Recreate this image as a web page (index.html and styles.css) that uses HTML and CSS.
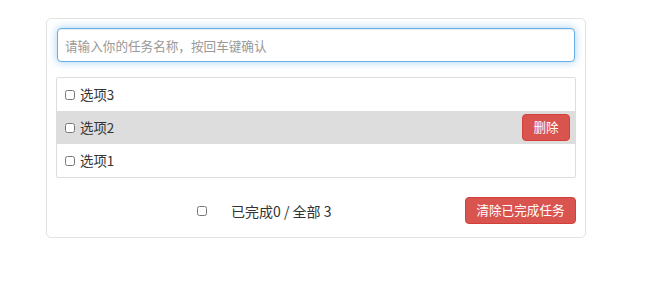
FILE: index.html
```html
<!DOCTYPE html>
<html lang="zh-CN">
<head>
    <meta charset="UTF-8">
    <meta name="viewport" content="width=device-width, initial-scale=1.0">
    <title>Todo List</title>
    <link rel="stylesheet" href="styles.css">
</head>
<body>

    <!-- main todo box -->
    <div class="todo-wrap">
        <input class="todo-input" type="text" placeholder="请输入你的任务名称，按回车键确认">

        <!-- task list -->
        <ul class="todo-list">
            <li class="todo-item">
                <label><input type="checkbox"><span>选项3</span></label>
            </li>
            <li class="todo-item active">
                <label><input type="checkbox"><span>选项2</span></label>
                <button class="btn btn-danger btn-del">删除</button>
            </li>
            <li class="todo-item">
                <label><input type="checkbox"><span>选项1</span></label>
            </li>
        </ul>

        <!-- footer with counts -->
        <div class="todo-footer">
            <input type="checkbox" class="check-all">
            <span class="todo-count">已完成0 / 全部 3</span>
            <button class="btn btn-danger btn-clear">清除已完成任务</button>
        </div>
    </div>

</body>
</html>
```

FILE: styles.css
```css
body {
    margin: 0;
    font-family: "Noto Sans CJK SC", "Liberation Sans", Arial, sans-serif;
    color: #333;
    background: #fff;
}
.todo-wrap {
    width: 540px;
    box-sizing: border-box;
    margin: 18px 0 0 46px;
    padding: 9px 9px 13px;
    border: 1px solid #e3e3e3;
    border-radius: 5px;
}
.todo-input {
    display: block;
    box-sizing: border-box;
    width: calc(100% - 2px);
    height: 34px;
    margin: 0 auto;
    padding: 6px 7px;
    border: 1px solid #66afe9;
    border-radius: 4px;
    outline: none;
    font-family: inherit;
    font-size: 12.6px;
    box-shadow: inset 0 1px 1px rgba(0, 0, 0, .075), 0 0 8px rgba(102, 175, 233, .6);
}
.todo-input::placeholder {
    color: #999;
}
.todo-list {
    list-style: none;
    margin: 15px 0 0;
    padding: 0;
    border: 1px solid #ddd;
    border-radius: 2px;
}
.todo-item {
    display: flex;
    align-items: center;
    justify-content: space-between;
    height: 33px;
    padding: 0 5px 0 7px;
    font-size: 13.4px;
}
.todo-item.active {
    background: #ddd;
}
.todo-item label {
    display: flex;
    align-items: center;
    line-height: 1;
}
input[type="checkbox"] {
    width: 10px;
    height: 10px;
    margin: 0 5px 0 1px;
}
.btn {
    height: 27px;
    padding: 0 9px;
    border-radius: 4px;
    font-family: inherit;
    font-size: 12.6px;
    line-height: 1;
    cursor: pointer;
}
.btn-danger {
    color: #fff;
    background-color: #d9534f;
    border: 1px solid #d43f3a;
}
.btn-danger:hover {
    background-color: #c9302c;
}
.btn-del {
    width: 48px;
}
.todo-footer {
    display: flex;
    align-items: center;
    margin-top: 19px;
    font-size: 14px;
    line-height: 1;
}
.todo-footer .check-all {
    margin: 0 0 0 141px;
}
.todo-count {
    margin-left: 24px;
}
.btn-clear {
    width: 111px;
    margin-left: auto;
}
```
